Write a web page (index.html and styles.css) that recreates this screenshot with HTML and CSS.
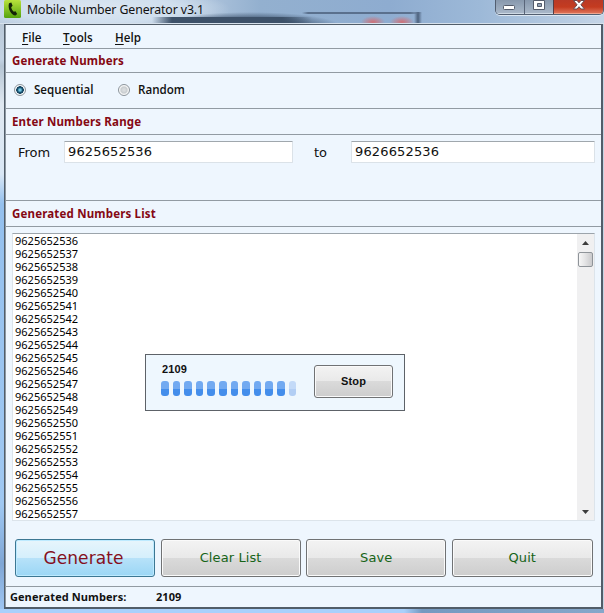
FILE: index.html
```html
<!DOCTYPE html>
<html lang="en">
<head>
<meta charset="utf-8">
<title>Mobile Number Generator v3.1</title>
<link rel="stylesheet" href="styles.css">
</head>
<body>
<div class="window">
  <header class="titlebar">
    <svg class="app-icon" width="17" height="18" viewBox="0 0 17 18">
      <defs><linearGradient id="g" x2="0" y2="1"><stop stop-color="#b9e23c"/><stop offset="1" stop-color="#55a30f"/></linearGradient></defs>
      <rect width="17" height="18" rx="1.5" fill="url(#g)"/>
      <path d="M5 3.2 7.3 2.5 8.6 5.8 7.2 7.2C7.5 9 8.4 10.500 9.800 11.700L11.500 11.200 13.200 13.900 11.500 15.400C7.500 15.600 3.300 8.500 5 3.200Z" fill="#142408"/>
    </svg>
    <span class="title">Mobile Number Generator v3.1</span>
    <div class="controls">
      <span class="control minimize"><svg width="28" height="14"><rect x="7.500" y="5.500" width="11" height="4" rx="1" fill="#fff" stroke="#535b6b"/></svg></span>
      <span class="control maximize"><svg width="28" height="14"><path d="M8.500.500h11v9h-11z M12.500 3.500v3h4v-3z" fill="#fff" fill-rule="evenodd" stroke="#535b6b"/></svg></span>
      <span class="control close"><svg width="49" height="14"><path d="M19.500.500h3.500l2 2.300 2-2.300h3.500l-3.600 4.300 3.600 4.200h-3.500l-2-2.300-2 2.300h-3.500l3.600-4.200z" fill="#fff" stroke="#6b4a50"/></svg></span>
    </div>
  </header>
  <main class="client">
    <nav class="menu"><span class="file"><u>F</u>ile</span><span class="tools"><u>T</u>ools</span><span class="help"><u>H</u>elp</span></nav>
    <h2 class="heading first">Generate Numbers</h2>
    <section class="modes">
      <span class="radio checked"></span><span class="mode sequential">Sequential</span>
      <span class="radio"></span><span class="mode">Random</span>
    </section>
    <h2 class="heading">Enter Numbers Range</h2>
    <section class="range">
      <span class="from">From</span><div class="field field-from">9625652536</div>
      <span class="to">to</span><div class="field field-to">9626652536</div>
    </section>
    <h2 class="heading">Generated Numbers List</h2>
    <section class="list">
      <div class="numbers">9625652536
9625652537
9625652538
9625652539
9625652540
9625652541
9625652542
9625652543
9625652544
9625652545
9625652546
9625652547
9625652548
9625652549
9625652550
9625652551
9625652552
9625652553
9625652554
9625652555
9625652556
9625652557</div>
      <div class="scrollbar">
        <svg class="arrow" width="7" height="4"><path d="M0 4 3.500 0 7 4z" fill="#3c3c3c"/></svg>
        <span class="thumb"></span>
        <svg class="arrow down" width="7" height="4"><path d="M0 0 3.500 4 7 0z" fill="#3c3c3c"/></svg>
      </div>
      <div class="progress">
        <div class="meter">
          <b class="count">2109</b>
          <div class="bars"><i></i><i></i><i></i><i></i><i></i><i></i><i></i><i></i><i></i><i></i><i></i><i class="faded"></i></div>
        </div>
        <div class="button stop">Stop</div>
      </div>
    </section>
    <section class="actions">
      <div class="button generate">Generate</div>
      <div class="button">Clear List</div>
      <div class="button">Save</div>
      <div class="button">Quit</div>
    </section>
    <footer class="status"><span class="status-label">Generated Numbers:</span><span>2109</span></footer>
  </main>
</div>
</body>
</html>
```

FILE: styles.css
```css
* { box-sizing: border-box; }
body { margin: 0; background: #a8cdf4; color: #111; overflow: hidden; }

.window {
  width: 604px;
  height: 613px;
  padding: 0 1px 4px 4px;
  background:
    linear-gradient(90deg, #a9d0fb 0 404px, #7599c0 422px, #86a7ca) 0 609px / 604px 4px no-repeat,
    linear-gradient(#bac9d8 0, #c3d3e4 35px, #b5c5d4 42px, #dfe8f1 80px, #d9e7f5 150px, #94c0ee 180px, #9fc8f2 480px, #7fa6d5 540px, #a9d0fb 600px) 0 24px / 4px 585px no-repeat,
    #c4d3e2;
  overflow: hidden;
}

.titlebar {
  display: flex;
  width: 604px;
  height: 24px;
  margin-left: -4px;
  padding-left: 4px;
  background:
    radial-gradient(ellipse 12px 6px at 373px 22px, #d07076, #d0707600),
    radial-gradient(ellipse 12px 6px at 402px 22px, #d07076, #d0707600),
    linear-gradient(90deg, #5a708d00, #5a708d 6px 108px, #5a708d00) 302px 12px / 120px 2px no-repeat,
    linear-gradient(90deg, #5a708d00, #4c617d 4px, #5a708d00) 414px 12px / 8px 12px no-repeat,
    linear-gradient(90deg, #3d516900, #3d5169 20px 130px, #3d516900) 152px 17px / 160px 7px no-repeat,
    radial-gradient(ellipse 90px 14px at 250px 26px, #344860 0, #3e536d 45%, #52698600 100%),
    radial-gradient(ellipse 135px 22px at 95px 9px, #dce6f1 0, #d0dfee 60%, #c0d2e500 100%),
    linear-gradient(90deg, #b9cbde, #bfd0e4 170px, #93b0cf 260px, #8eacd0 390px, #9db9d8 480px, #b8cce2 570px, #c5d5e7);
  border-bottom: 1px solid #d6e1ec;
}
.app-icon { margin-right: 6px; flex: none; }
.title { width: 302px; font: 12.300px/19px "Noto Sans", sans-serif; white-space: nowrap; letter-spacing: -.1px; }
.controls {
  display: flex;
  width: 109px;
  height: 15px;
  margin-left: 166px;
  border: 1px solid #525e70;
  border-top: 0;
  border-radius: 0 0 5px 5px;
  overflow: hidden;
  box-shadow: 0 1px #dce7f2;
}
.control { flex: none; height: 14px; background: linear-gradient(#8798ad, #abb9ca); box-shadow: inset 0 -1px #ced9e4; }
.minimize { width: 29px; border-right: 1px solid #596579; }
.maximize { width: 29px; border-right: 1px solid #593b43; }
.close { width: 50px; background: linear-gradient(#b93926, #c43b20 7px, #e1795f); box-shadow: inset 0 -1px #eea58f; }
.control svg { display: block; }

.client {
  display: flex;
  flex-direction: column;
  width: 599px;
  height: 585px;
  border: 1px solid #515d69;
  border-right-width: 2px;
  border-bottom-width: 2px;
  background: #eef6fe;
  box-shadow: inset 1px 0 #8e99a3;
}
.menu { display: flex; height: 23px; padding-left: 17px; font: 600 11.600px/25px "Open Sans", sans-serif; }
.menu u { text-decoration-thickness: 1px; text-underline-offset: 2px; }
.file { width: 41px; }
.tools { width: 52px; }

.heading {
  height: 27px;
  margin: 0 0 0 1px;
  padding-left: 6px;
  border: solid #929ba3;
  border-width: 1px 0;
  color: #850813;
  font: 700 11.500px/25px "Noto Sans", sans-serif;
  letter-spacing: .17px;
  white-space: nowrap;
}
.heading.first { height: 25px; line-height: 24px; }

.modes { display: flex; align-items: center; height: 35px; padding: 0 0 1px 9px; font: 600 11.600px/18px "Open Sans", sans-serif; }
.radio { width: 12px; height: 12px; margin: 0 8px 0 0; border: 1px solid #8c949b; border-radius: 50%; background: radial-gradient(circle, #d9dcde 1px, #c9cdd0 3px, #f8f8f8 4.500px); }
.radio.checked { background: radial-gradient(circle, #73c8e6 0 1px, #17516f 2.500px, #0f3c59 3.500px, #f5f8fa 4px); }
.sequential { width: 84px; }

.range { display: flex; height: 65px; padding: 6px 6px 0 13px; font: 13px/24px "DejaVu Sans", sans-serif; }
.from { width: 46px; }
.field { height: 22px; padding-left: 3px; border: 1px solid #dbe2e8; border-top-color: #a0a7ad; border-radius: 1px; background: #fff; line-height: 20px; letter-spacing: .15px; }
.field-from { width: 229px; }
.to { width: 58px; padding-left: 21px; }
.field-to { width: 244px; }

.list { display: flex; position: relative; height: 288px; margin: 6px 6px 0 7px; border: 1px solid #dce4eb; border-top-color: #9ca4ab; background: #fff; overflow: hidden; flex: none; }
.numbers { flex: 1; padding: 0 0 0 2px; font: 11px/13px "Noto Sans", sans-serif; white-space: pre; letter-spacing: .02px; color: #000; }
.scrollbar { display: flex; flex-direction: column; align-items: center; width: 17px; background: #f0f0f1; padding: 7px 0 6px; }
.thumb { width: 15px; height: 15px; margin-top: 7px; border: 1px solid #8f9499; border-radius: 2px; background: linear-gradient(90deg, #f7f7f7, #e5e5e6 45%, #cacacc); }
.down { margin-top: auto; }

.progress { display: flex; position: absolute; left: 132px; top: 120px; width: 260px; height: 57px; padding: 8px 11px 0 15px; justify-content: space-between; border: 1px solid #5d6268; background: #eef7fe; }
.count { display: block; height: 18px; font: 700 11px/12px "Liberation Sans", sans-serif; padding-left: 1px; letter-spacing: .1px; }
.bars { display: flex; gap: 4px; }
.bars i { width: 7.600px; height: 15px; border-radius: 3px; background: linear-gradient(#72aaf1 0 8px, #448eeb 8px); }
.bars .faded { background: linear-gradient(#c3daf8 0 8px, #b2cef4 8px); }

.button { display: flex; align-items: center; justify-content: center; border: 1px solid #707274; border-radius: 3px; background: linear-gradient(#f3f3f3, #e9e9e9 49%, #dadada 50%, #cdcdcd); box-shadow: inset 0 0 0 1px #fafafa; color: #166417; font: 13px/20px "DejaVu Sans", sans-serif; letter-spacing: .1px; }
.stop { width: 79px; height: 33px; margin-top: 2px; padding-bottom: 1px; color: #111; font: 700 11px/12px "Liberation Sans", sans-serif; letter-spacing: .2px; }
.actions { display: grid; grid-template-columns: 140px 140px 140px 141px; gap: 5.600px; height: 38px; margin: 18px 0 0 10px; }
.generate { padding-right: 3px; border-color: #3c7793; background: linear-gradient(#e7f5fc, #d5effc 49%, #b7e2f9 50%, #9bd6f5); color: #85101d; font-size: 17px; box-shadow: inset 0 0 0 1px #bdeaff; }

.status { display: flex; height: 21px; margin-top: auto; padding-left: 5px; border-top: 1px solid #929ba3; font: 700 11px/20px "Open Sans", sans-serif; letter-spacing: .08px; white-space: nowrap; }
.status-label { width: 146px; }
```
